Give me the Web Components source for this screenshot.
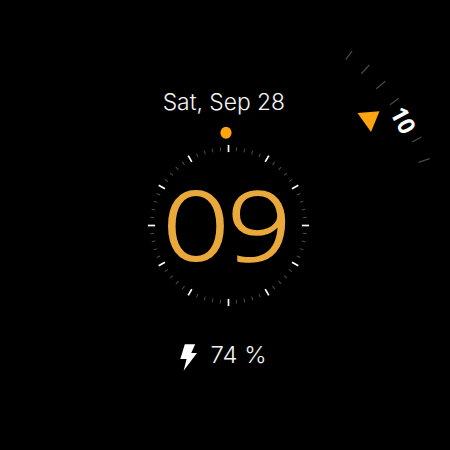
<!DOCTYPE html>
<html lang="en">
<head>
<meta charset="utf-8">
<title>Watch face</title>
<style>
html,body{margin:0;background:#000}
</style>
</head>
<body>
<watch-face></watch-face>
<script>
const define = (name, css, html, fill) => customElements.define(name, class extends HTMLElement {
  constructor() {
    super();
    this.attachShadow({mode: 'open'}).innerHTML = `<style>${css}</style>${html}`;
    if (fill) fill(this.shadowRoot);
  }
});

const NS = 'http://www.w3.org/2000/svg';
function tick(parent, angle, inner, outer, stroke, width) {
  const l = document.createElementNS(NS, 'line');
  l.setAttribute('y1', -inner);
  l.setAttribute('y2', -outer);
  l.setAttribute('transform', `rotate(${angle})`);
  l.setAttribute('stroke', stroke);
  l.setAttribute('stroke-width', width);
  parent.append(l);
}

define('date-label',
  `:host{display:block;height:30px}
   svg{display:block}
   text{font:300 22.2px Inter,"Open Sans",sans-serif;fill:#f4f4f4}`,
  `<svg width="450" height="30"><text x="162.7" y="22" textLength="122.4" lengthAdjust="spacingAndGlyphs">Sat, Sep 28</text></svg>`);

define('hour-dial',
  `:host{display:block;height:190px}
   svg{display:block}
   text{font:300 95px "Open Sans","Noto Sans",sans-serif;fill:#eaa93b;stroke:#eaa93b;stroke-width:1.8px;vector-effect:non-scaling-stroke}
   .zero{font:200 93.5px Inter,sans-serif;stroke-width:2.2px}`,
  `<svg width="450" height="190" viewBox="0 120 450 190">
     <ellipse cx="226" cy="132.7" rx="5.6" ry="6" fill="#fda50f"/>
     <g id="ticks" transform="translate(228.5 225.5)"></g>
     <text class="zero" transform="translate(161.5 260) scale(1.22 1)">0</text>
     <text transform="translate(227.6 260.5) scale(1.175 1)">9</text>
   </svg>`,
  root => {
    const g = root.getElementById('ticks');
    for (let i = 0; i < 60; i++) {
      if (i % 5) tick(g, i * 6, 74.8, 78.6, '#4c4c4c', 1);
      else tick(g, i * 6, 73.4, 80.6, '#fff', 1.7);
    }
  });

define('battery-status',
  `:host{display:block;height:40px}
   svg{display:block}
   text{font:300 22.4px Inter,"Open Sans",sans-serif;fill:#f4f4f4}`,
  `<svg width="450" height="40" viewBox="0 335 450 40">
     <path d="M184.8 344.2H195.2L191.2 353H197L183.6 370.8L186.6 358.9H180.3Z" fill="#fff"/>
     <text x="210.5" y="363" textLength="56" lengthAdjust="spacingAndGlyphs">74 %</text>
   </svg>`);

define('minute-ring',
  `:host{display:block;position:absolute;left:335px;top:40px}
   svg{display:block}
   text{font:700 23.5px "Open Sans","Noto Sans",sans-serif;fill:#fff}`,
  `<svg width="115" height="130" viewBox="335 40 115 130">
     <g stroke="#484848" stroke-width="1.3">
       <path d="M345.7 59.7L352 51.2M361.3 73.8L369.3 65M376.2 88.7L385.3 81.2M390 104.7L398.7 98.3M412 142L421.5 137M418.5 162.3L429.7 158.7"/>
     </g>
     <path d="M357.5 113L379.5 111.2L371 132Z" fill="#fda410"/>
     <text transform="translate(403.4 120.8) rotate(62)" x="-13.8" y="8.3" textLength="26.5" lengthAdjust="spacingAndGlyphs">10</text>
   </svg>`);

define('watch-face',
  `:host{display:flex;flex-direction:column;box-sizing:border-box;position:relative;width:450px;height:450px;padding-top:88px;overflow:hidden;background:#000}
   hour-dial{margin-top:2px}
   battery-status{margin-top:25px}`,
  `<date-label></date-label><hour-dial></hour-dial><battery-status></battery-status><minute-ring></minute-ring>`);
</script>
</body>
</html>
